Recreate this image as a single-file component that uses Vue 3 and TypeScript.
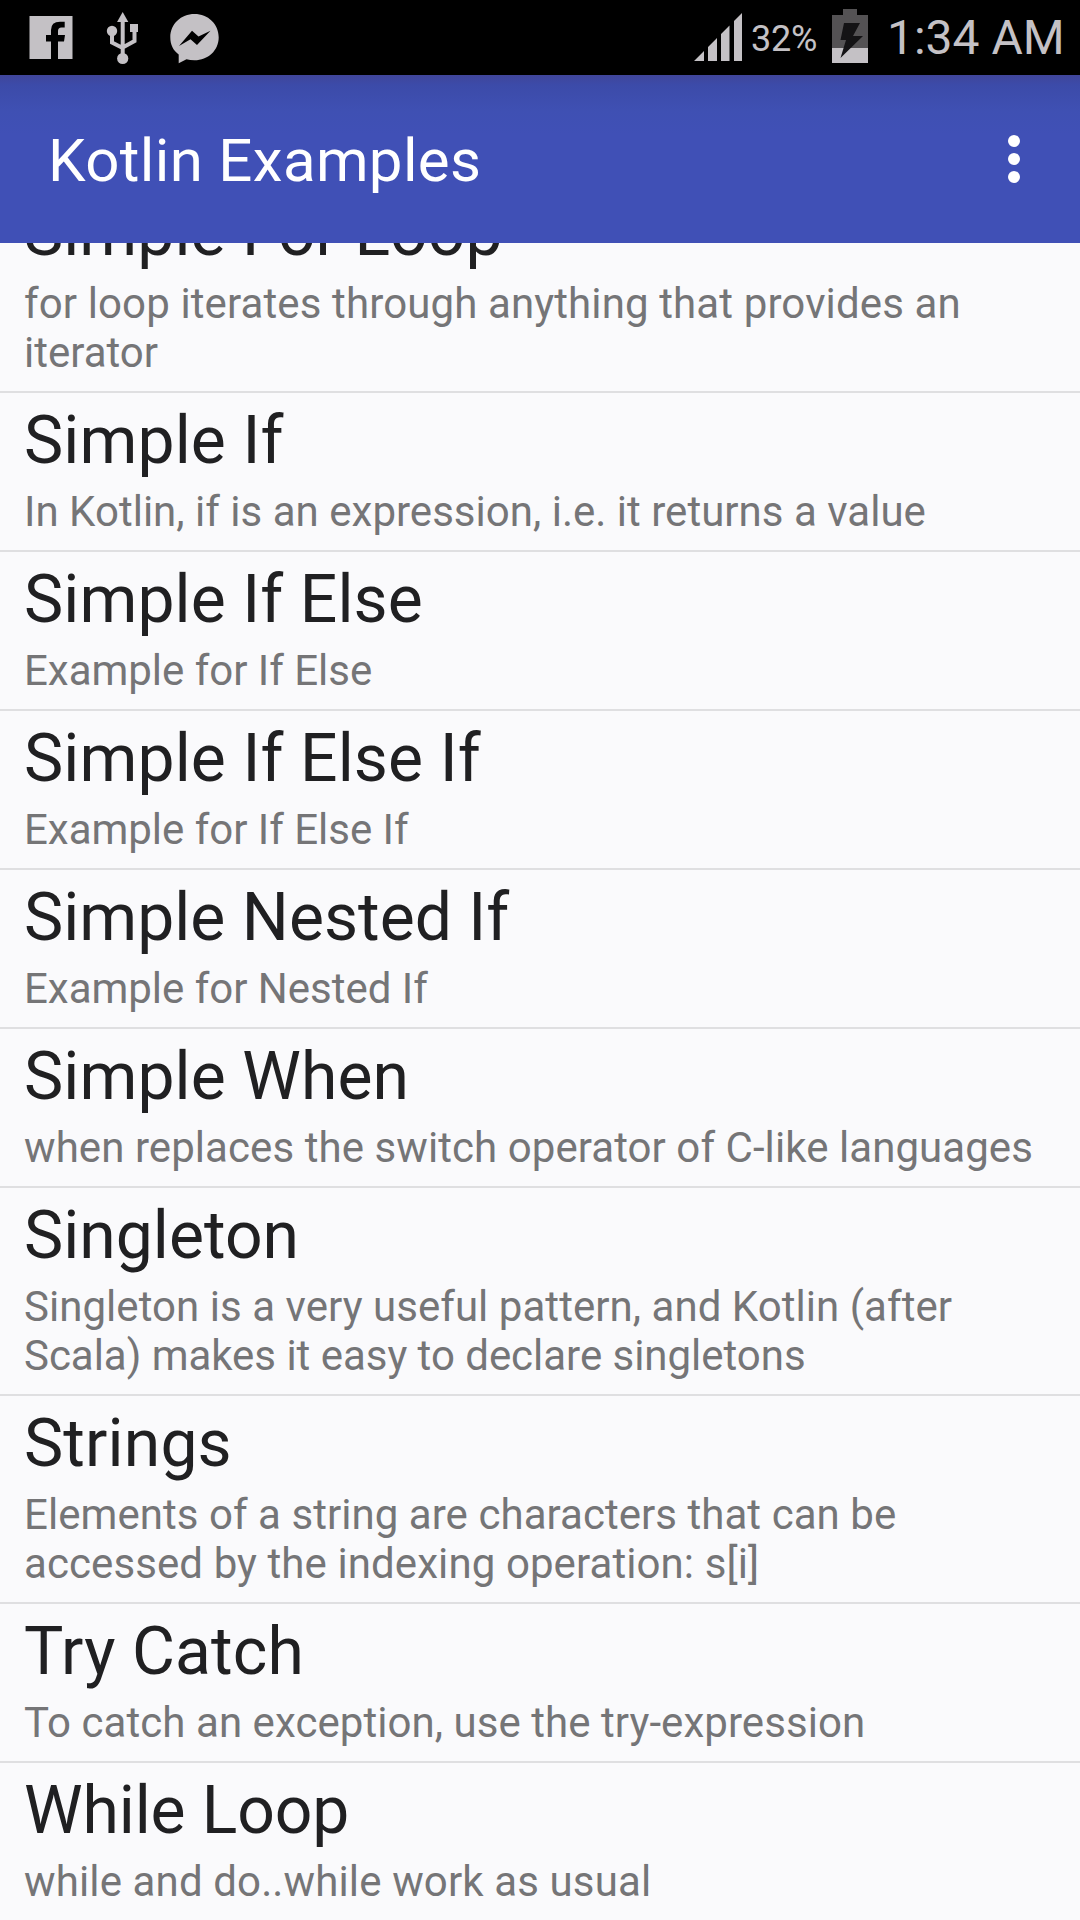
<script setup lang="ts">
interface Line {
  text: string
  tracking: number
}

interface Example {
  title: Line
  lines: Line[]
}

const line = (text: string, tracking = 0): Line => ({ text, tracking })

const examples: Example[] = [
  {
    title: line('Simple For Loop', 0.06),
    lines: [line('for loop iterates through anything that provides an', 0.12), line('iterator')],
  },
  { title: line('Simple If', 0.12), lines: [line('In Kotlin, if is an expression, i.e. it returns a value', 0.02)] },
  { title: line('Simple If Else', 0.1), lines: [line('Example for If Else', -0.02)] },
  { title: line('Simple If Else If', 0.12), lines: [line('Example for If Else If', -0.02)] },
  { title: line('Simple Nested If', 0.03), lines: [line('Example for Nested If', -0.02)] },
  { title: line('Simple When', 0.1), lines: [line('when replaces the switch operator of C-like languages', 0.07)] },
  {
    title: line('Singleton', 0.03),
    lines: [
      line('Singleton is a very useful pattern, and Kotlin (after', 0.045),
      line('Scala) makes it easy to declare singletons', -0.03),
    ],
  },
  {
    title: line('Strings', 0.15),
    lines: [
      line('Elements of a string are characters that can be', 0.05),
      line('accessed by the indexing operation: s[i]', 0.09),
    ],
  },
  { title: line('Try Catch', 0.12), lines: [line('To catch an exception, use the try-expression', 0.055)] },
  { title: line('While Loop', -0.1), lines: [line('while and do..while work as usual', 0.13)] },
]
</script>

<template>
  <div class="screen">
    <header class="status">
      <svg class="notifications" width="240" height="75" viewBox="0 0 240 75">
        <path fill="#c4c1c5" d="M29.5 16H72.5V59H58V41.5H64L65 35H58V31Q58 27.500 61.500 27.500H64.700V21.700H60Q51 21.700 51 30V35H46V41.500H51V59H29.500Z" />
        <g fill="none" stroke="#c4c1c5" stroke-width="4">
          <path d="M122.700 20V56M112 32V42.500L122.700 48M134.500 30V41L122.700 47.500" />
        </g>
        <path fill="#c4c1c5" d="M122.700 12L128.300 22H117.100Z" />
        <circle cx="112" cy="31" r="5.200" fill="#c4c1c5" />
        <rect x="130" y="24" width="8" height="8" fill="#c4c1c5" />
        <circle cx="122.700" cy="58.500" r="5.600" fill="#c4c1c5" />
        <path fill="#c4c1c5" d="M194.500 14C208 14 218.700 24 218.700 37.300S208 60.300 194.500 60.300Q190 60.300 186.500 59.200L178.700 63.300V54.500C173 50.500 170.300 44.500 170.300 37.300C170.300 24 181 14 194.500 14Z" />
        <path fill="#000" d="M179 46L192 30.700L198.500 36.500L210.500 30.700L197 45L190.500 39.300Z" />
      </svg>
      <div class="system">
        <svg width="50" height="75" viewBox="0 0 50 75" class="signal" fill="#c4c1c5">
          <path d="M0 61L10 51V61ZM14 61V47L23 38V61ZM27 61V34L35.500 25.500V61ZM40 61V21L48 13V61Z" />
        </svg>
        <span class="percent">32%</span>
        <svg width="36" height="75" viewBox="0 0 36 75" class="battery">
          <path fill="#545254" d="M11 9H25V15H36V48H0V15H11Z" />
          <path fill="#c4c1c5" d="M0 48H36V63H0Z" />
          <path fill="#141315" d="M12 23H28L21 36H31L8.500 58L14 40H8.500Z" />
        </svg>
        <span class="clock">1:34 AM</span>
      </div>
    </header>
    <nav class="appbar">
      <h1>Kotlin Examples</h1>
      <svg width="12" height="48" viewBox="0 0 12 48" fill="#fff">
        <circle cx="6" cy="6" r="6" />
        <circle cx="6" cy="24" r="6" />
        <circle cx="6" cy="42" r="6" />
      </svg>
    </nav>
    <main class="viewport">
      <ul>
        <li v-for="item in examples" :key="item.title.text">
          <h2 :style="{ letterSpacing: item.title.tracking + 'px' }">{{ item.title.text }}</h2>
          <p v-for="row in item.lines" :key="row.text" :style="{ letterSpacing: row.tracking + 'px' }">{{ row.text }}</p>
        </li>
      </ul>
    </main>
  </div>
</template>

<style>
body {
  margin: 0;
}
</style>

<style scoped>
.screen {
  width: 1080px;
  height: 1920px;
  display: flex;
  flex-direction: column;
  overflow: hidden;
  background: #fafafc;
  font-family: Roboto, sans-serif;
}
.status {
  flex: none;
  height: 75px;
  display: flex;
  justify-content: space-between;
  background: #000;
  color: #c4c1c5;
}
.system {
  display: flex;
  white-space: nowrap;
}
.percent {
  width: 67px;
  margin-left: 7px;
  font-size: 36px;
  line-height: 78px;
  letter-spacing: -0.2px;
}
.battery {
  margin-left: 14px;
}
.clock {
  width: 193px;
  margin-left: 19px;
  font-size: 48px;
  line-height: 76px;
}
.appbar {
  flex: none;
  box-sizing: border-box;
  height: 168px;
  padding: 0 60px 0 48px;
  display: flex;
  align-items: center;
  justify-content: space-between;
  background: linear-gradient(#40469a 0, #3c4ba9 10px, #3f50b3 36px, #4050b6 60px);
  color: #fff;
}
h1 {
  margin: 4px 0 0;
  font-size: 60px;
  font-weight: 400;
  line-height: 70px;
  letter-spacing: 0.35px;
}
.viewport {
  flex: 1;
  min-height: 0;
  overflow: hidden;
}
ul {
  margin: -58px 0 0;
  padding: 0;
  list-style: none;
}
li {
  padding: 9px 24px 14px;
  border-bottom: 2px solid #dfdfe1;
  white-space: nowrap;
}
h2 {
  margin: 0 0 8px;
  font-size: 66px;
  font-weight: 400;
  line-height: 77px;
  color: #202022;
}
p {
  margin: 0;
  font-size: 42px;
  line-height: 49px;
  color: #757577;
}
</style>
